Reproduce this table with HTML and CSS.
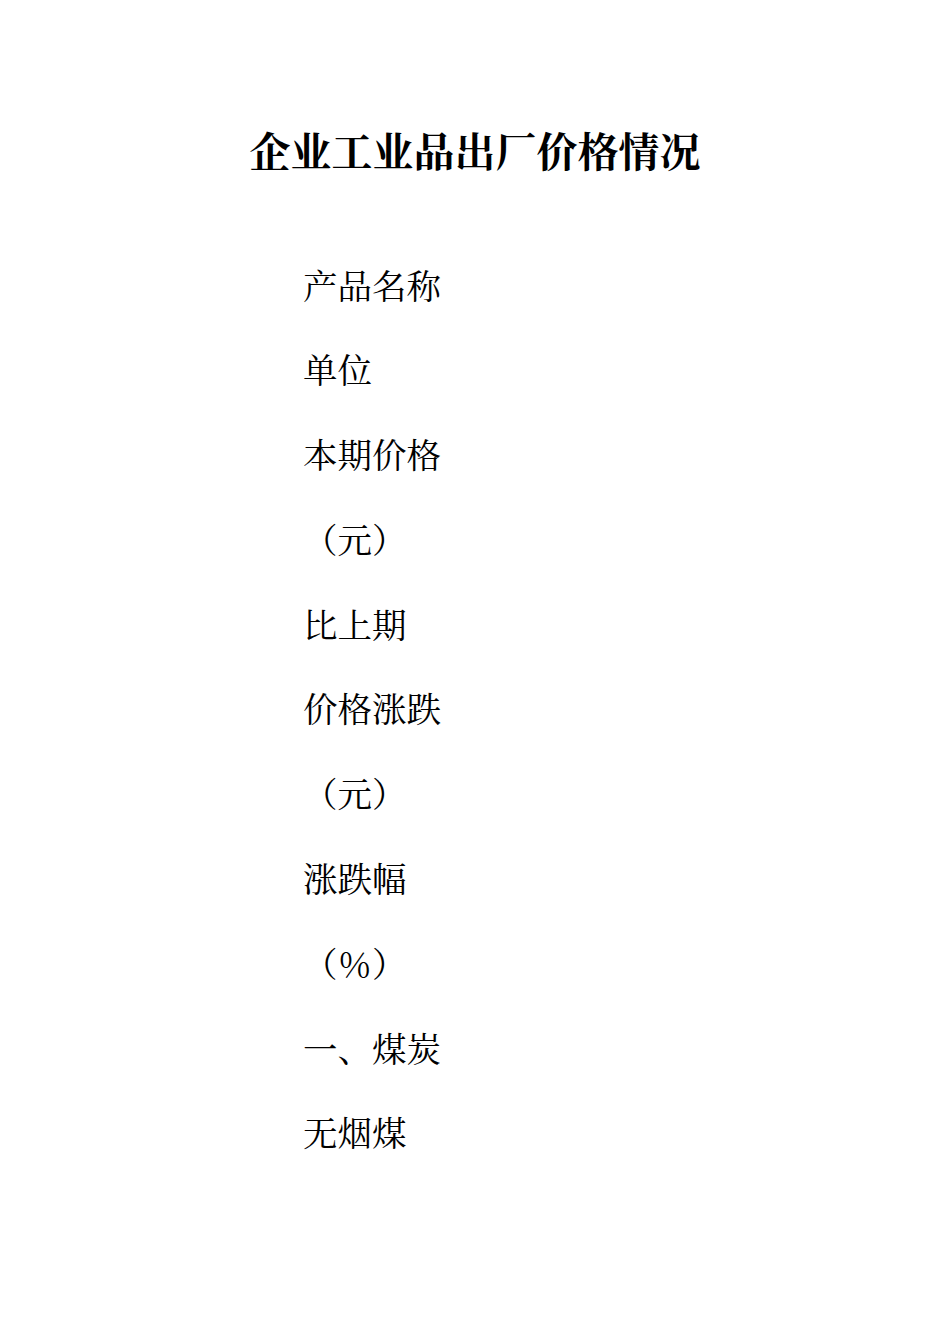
FILE: index.html
```html
<!DOCTYPE html>
<html lang="zh-CN">
<head>
<meta charset="utf-8">
<title>企业工业品出厂价格情况</title>
<link rel="stylesheet" href="styles.css">
</head>
<body>
<main class="page">
  <h1 class="title">企业工业品出厂价格情况</h1>
  <div class="items">
    <p class="item">产品名称</p>
    <p class="item">单位</p>
    <p class="item">本期价格</p>
    <p class="item">（元）</p>
    <p class="item">比上期</p>
    <p class="item">价格涨跌</p>
    <p class="item">（元）</p>
    <p class="item">涨跌幅</p>
    <p class="item">（％）</p>
    <p class="item">一、煤炭</p>
    <p class="item">无烟煤</p>
  </div>
</main>
</body>
</html>
```

FILE: styles.css
```css
html, body {
  margin: 0;
  padding: 0;
  background: #ffffff;
}
.page {
  width: 950px;
  min-height: 1344px;
  font-family: "Noto Serif CJK SC", "Noto Sans CJK SC", serif;
  color: #000000;
}
.title {
  margin: 0;
  padding-top: 120px;
  height: 60px;
  line-height: 60px;
  font-size: 41px;
  font-weight: bold;
  text-align: center;
}
.items {
  margin-top: 61.5px;
  padding-left: 303px;
}
.item {
  margin: 0;
  height: 84.8px;
  line-height: 84.8px;
  font-size: 34.5px;
  font-weight: normal;
}
```
